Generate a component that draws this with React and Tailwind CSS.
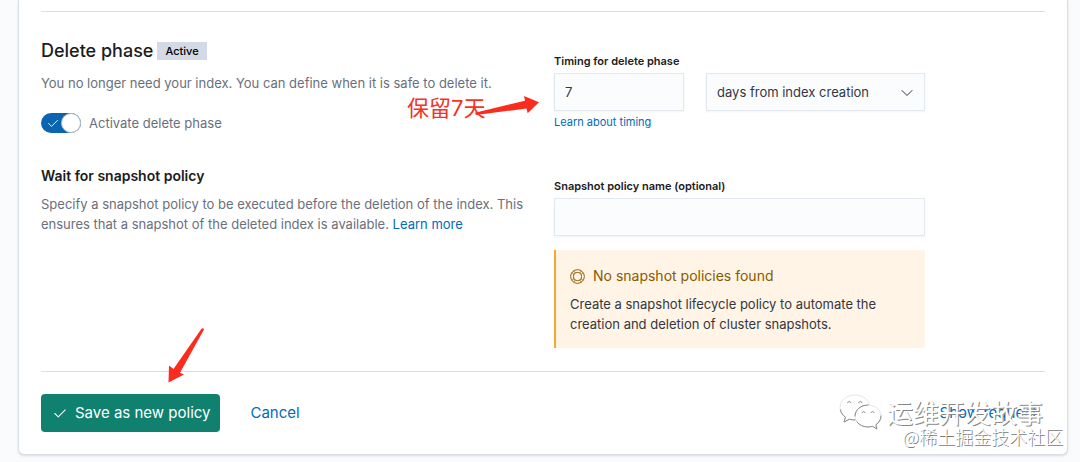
import { useState } from "react";

const CheckIcon = ({ className }) => (
  <svg
    viewBox="0 0 16 16"
    fill="none"
    stroke="currentColor"
    strokeWidth="1.200"
    strokeLinecap="round"
    strokeLinejoin="round"
    className={className}
    aria-hidden="true"
  >
    <path d="M2 8.500 6 12.500l8-8" />
  </svg>
);

const HelpIcon = ({ className }) => (
  <svg
    viewBox="0 0 16 16"
    fill="none"
    stroke="currentColor"
    className={className}
    aria-hidden="true"
  >
    <circle cx="8" cy="8" r="7.300" />
    <circle cx="8" cy="8" r="4.300" />
    <path d="M3.800 2.200 6 4.300M2.200 3.800 4.300 6M12.200 2.200 10 4.300M13.800 3.800 11.700 6M3.800 13.800 6 11.700M2.200 12.200 4.300 10M12.200 13.800 10 11.700M13.800 12.200 11.700 10" />
  </svg>
);

const ChatBubblesIcon = ({ className }) => (
  <svg viewBox="0 0 44 36" className={className} aria-hidden="true">
    <g fill="#fff" stroke="#dedede" strokeWidth=".8">
      <path d="M16 1C7.500 1 1 6.500 1 13.500c0 4 2 7.300 5.500 9.600L5 28l5.500-2.800c1.800.5 3.600.8 5.500.8 8.500 0 15-5.500 15-12.500S24.500 1 16 1Z" />
      <path d="M29 11c-7.200 0-13 4.900-13 11s5.800 11 13 11c1.600 0 3.100-.2 4.500-.7L38 35l-1.200-4.200C40 28.800 42 25.600 42 22c0-6.100-5.800-11-13-11Z" />
    </g>
    <g fill="none" stroke="#888" strokeLinecap="round">
      <path d="M1.500 16c.6 3 2.200 5.400 5 7.100L5 28l5.500-2.800c1.800.5 3.600.8 5.500.8M16 22c0-6.100 5.800-11 13-11M18 28c2.300 3 6.300 5 11 5 1.600 0 3.100-.2 4.500-.7L38 35l-1.200-4.200C40 28.800 42 25.600 42 22" />
      <path d="M8.500 8.500q1.800-2.500 3.600 0M19.500 8.500q1.800-2.500 3.600 0M23 18.500q1.600-2.200 3.200 0M32 18.500q1.600-2.200 3.200 0" />
    </g>
  </svg>
);

const Watermark = () => (
  <div className="pointer-events-none absolute right-1 bottom-2 flex flex-col items-end font-['Noto_Sans_CJK_SC',sans-serif] text-white">
    <div className="mr-5 flex items-center">
      <ChatBubblesIcon className="mr-1 h-9 w-11" />
      <span className="text-[26px] leading-7 [text-shadow:1px_1px_0_#888]">
        运维开发故事
      </span>
    </div>
    <span className="-mt-1 text-[18px] leading-5 font-light [text-shadow:1px_1px_0_#777]">
      @稀土掘金技术社区
    </span>
  </div>
);

export default function App() {
  const [active, setActive] = useState(true);
  const [days, setDays] = useState("7");
  const [policy, setPolicy] = useState("");

  return (
    <div className="bg-[#fafbfd] pr-3 pb-2 pl-[18px] font-[Inter,sans-serif] text-sm text-[#343741]">
      <main className="relative rounded-b-md border border-t-0 border-[#d9dee8] bg-white px-[22px] pt-[11px] shadow-sm">
        <hr className="border-[#d9dfe9]" />

        <section className="grid grid-cols-2 gap-x-[22px]">
          <div className="pt-6">
            <div className="flex items-center gap-1">
              <h2 className="text-lg leading-[30px] font-medium text-[#1a1c21]">
                Delete phase
              </h2>
              <span className="bg-[#d3dae6] px-2 text-[11px] leading-[18px] font-medium text-black">
                Active
              </span>
            </div>
            <p className="mt-[7px] text-[13px] leading-5 text-[#69707d]">
              You no longer need your index. You can define when it is safe to
              delete it.
            </p>
            <label className="mt-5 flex w-fit items-center gap-2 text-[13px] leading-5 text-[#69707d]">
              <input
                type="checkbox"
                role="switch"
                checked={active}
                onChange={(e) => setActive(e.target.checked)}
                className="peer sr-only"
              />
              <span className="flex h-5 w-10 items-center justify-between rounded-full bg-[#98a2b3] pl-1.5 peer-checked:bg-[#0b64b0]">
                <CheckIcon className="h-3 w-3 text-white" />
                <span className="h-5 w-5 rounded-full border border-[#b5bcc8] bg-white" />
              </span>
              Activate delete phase
            </label>
          </div>

          <div className="relative max-w-[371px] pt-10">
            <label
              htmlFor="timing"
              className="block text-[11px] leading-[18px] font-semibold text-[#1a1c21]"
            >
              Timing for delete phase
            </label>
            <div className="mt-[3px] flex gap-[22px]">
              <input
                id="timing"
                value={days}
                onChange={(e) => setDays(e.target.value)}
                className="h-[38px] w-[130px] border border-[#e3e7ee] bg-[#fbfcfd] px-2.5 text-[13px] shadow-xs"
              />
              <div className="relative flex-1">
                <select
                  aria-label="Timing unit"
                  className="h-[38px] w-full appearance-none border border-[#e3e7ee] bg-[#fbfcfd] px-2.5 text-[13px] shadow-xs"
                >
                  <option>days from index creation</option>
                  <option>hours from index creation</option>
                </select>
                <svg
                  viewBox="0 0 16 16"
                  fill="none"
                  stroke="currentColor"
                  strokeLinecap="round"
                  className="pointer-events-none absolute top-3 right-2.5 h-4 w-4"
                  aria-hidden="true"
                >
                  <path d="m3 5.500 5 5 5-5" />
                </svg>
              </div>
            </div>
            <a
              href="#timing"
              className="mt-[3px] block w-fit text-[11px] leading-4 text-[#006bb8]"
            >
              Learn about timing
            </a>

            <div className="pointer-events-none absolute top-[82px] -left-[147px] font-[Inter,'Noto_Sans_CJK_SC',sans-serif] text-[22px] leading-7 text-[#f5341f]">
              保留7天
              <svg
                viewBox="0 0 70 26"
                fill="#fb2c1d"
                className="absolute top-0 left-16 h-[26px] w-[70px]"
                aria-hidden="true"
              >
                <path d="M4 18.700 54 6.700 53 2 68 8.300 56.700 19.300 55.500 14.500 5 21Z" />
              </svg>
            </div>
          </div>
        </section>

        <section className="mt-[31px] grid grid-cols-2 gap-x-[22px]">
          <div>
            <h3 className="text-sm leading-6 font-semibold text-[#1a1c21]">
              Wait for snapshot policy
            </h3>
            <p className="mt-1.5 text-[13px] leading-5 text-[#69707d]">
              Specify a snapshot policy to be executed before the deletion of
              the index. This ensures that a snapshot of the deleted index is
              available.{" "}
              <a href="#snapshot" className="text-[#006bb8]">
                Learn more
              </a>
            </p>
          </div>

          <div className="max-w-[371px] pt-[13px]">
            <label
              htmlFor="policy"
              className="block text-[11px] leading-[18px] font-semibold text-[#1a1c21]"
            >
              Snapshot policy name (optional)
            </label>
            <input
              id="policy"
              value={policy}
              onChange={(e) => setPolicy(e.target.value)}
              className="mt-[3px] block h-[38px] w-full border border-[#e3e7ee] bg-[#fbfcfd] px-2.5 text-[13px] shadow-xs"
            />
            <div className="mt-3.5 border-l-2 border-[#f5a732] bg-[#fff4e5] px-3.5 py-3.5">
              <h4 className="flex items-center gap-2 text-sm leading-6 text-[#8a5a00]">
                <HelpIcon className="h-[15px] w-[15px]" />
                No snapshot policies found
              </h4>
              <p className="mt-1.5 text-[13px] leading-5">
                Create a snapshot lifecycle policy to automate the creation and
                deletion of cluster snapshots.
              </p>
            </div>
          </div>
        </section>

        <hr className="mt-[23px] border-[#d9dfe9]" />

        <footer className="relative flex items-center py-[22px]">
          <button
            type="button"
            className="flex h-[38px] items-center gap-2 rounded-sm bg-[#10806f] pr-2.5 pl-3 text-[15px] text-white"
          >
            <CheckIcon className="h-3.5 w-3.5" />
            Save as new policy
          </button>
          <button
            type="button"
            className="ml-[30px] text-[15px] text-[#006bb8]"
          >
            Cancel
          </button>
          <button
            type="button"
            className="mr-2 ml-auto text-[15px] text-[#006bb8]"
          >
            Show request
          </button>
          <svg
            viewBox="0 0 40 56"
            fill="#fb2c1d"
            className="pointer-events-none absolute -top-11 left-[126px] h-14 w-10"
            aria-hidden="true"
          >
            <path d="M34.500.800Q36.500-.5 37 1.500L13 44.700 17 46.500 1.500 54.500 2 37.500 6.500 41Z" />
          </svg>
        </footer>

        <Watermark />
      </main>
    </div>
  );
}
